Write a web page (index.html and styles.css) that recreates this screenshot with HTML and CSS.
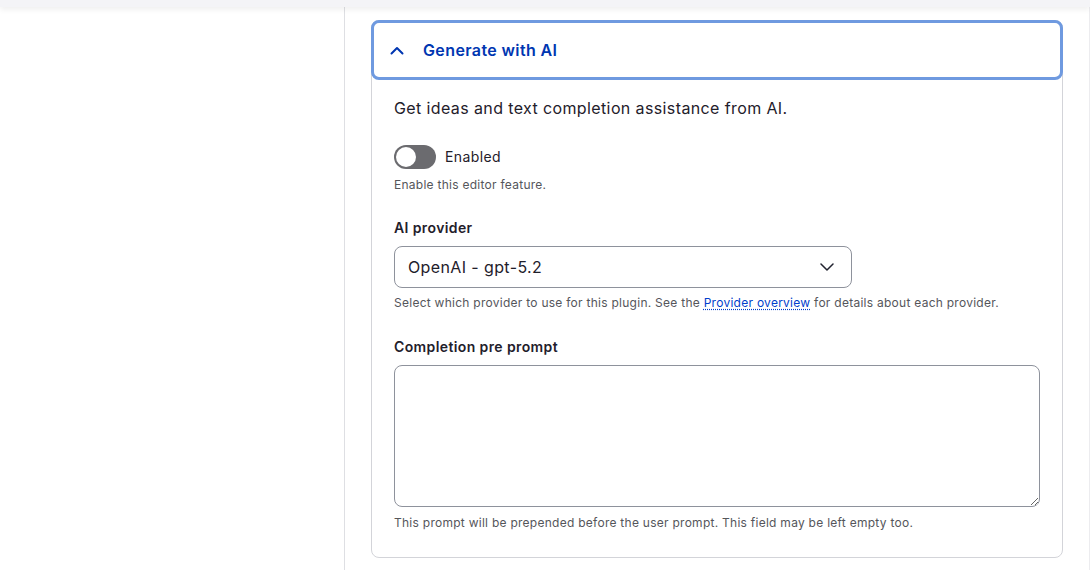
FILE: index.html
```html
<!DOCTYPE html>
<html lang="en">
<head>
    <meta charset="UTF-8">
    <meta name="viewport" content="width=device-width, initial-scale=1.0">
    <title>Generate with AI</title>
    <link rel="stylesheet" href="styles.css">
</head>
<body>

    <div class="topbar"></div>

    <div class="layout">
        <div class="sidebar"></div>

        <div class="main">
            <details class="card" open>
                <summary class="card-summary">
                    <svg class="chevron" width="14" height="9" viewBox="0 0 14 9">
                        <path d="M1.5 7.5 L7 2 L12.5 7.5" fill="none" stroke="#0036b1" stroke-width="2" stroke-linecap="round" stroke-linejoin="round"/>
                    </svg>
                    <span class="card-title">Generate with AI</span>
                </summary>

                <div class="card-body">
                    <p class="intro">Get ideas and text completion assistance from AI.</p>

                    <!-- Enabled toggle -->
                    <label class="toggle-row">
                        <span class="toggle"><span class="knob"></span></span>
                        <span class="toggle-label">Enabled</span>
                    </label>
                    <div class="description">Enable this editor feature.</div>

                    <!-- Provider -->
                    <div class="field">
                        <label class="field-label">AI provider</label>
                        <div class="select">
                            <span>OpenAI - gpt-5.2</span>
                            <svg width="14" height="8" viewBox="0 0 14 8">
                                <path d="M1 1 L7 7 L13 1" fill="none" stroke="#222330" stroke-width="1.5" stroke-linecap="round" stroke-linejoin="round"/>
                            </svg>
                        </div>
                        <div class="description">Select which provider to use for this plugin. See the <a href="#">Provider overview</a> for details about each provider.</div>
                    </div>

                    <!-- Pre prompt -->
                    <div class="field">
                        <label class="field-label">Completion pre prompt</label>
                        <textarea class="textarea"></textarea>
                        <div class="description">This prompt will be prepended before the user prompt. This field may be left empty too.</div>
                    </div>
                </div>
            </details>
        </div>
    </div>

</body>
</html>
```

FILE: styles.css
```css
body {
    font-family: Inter, "Noto Sans", sans-serif;
    letter-spacing: 0.024em;
    color: #1f202b;
    background-color: #fff;
    margin: 0;
    padding: 0;
}
.topbar {
    height: 7px;
    background-color: #f4f4f7;
    box-shadow: 0 2px 6px rgba(0, 0, 0, 0.08);
    position: relative;
}
.layout {
    display: flex;
    height: 563px;
}
.sidebar {
    width: 344px;
    border-right: 1px solid #dedfe3;
    flex-shrink: 0;
}
.main {
    flex: 1;
    padding: 13px 26px 0 26px;
    border-right: 1px solid #ececef;
}
.card {
    border: 1px solid #d3d4d9;
    border-radius: 8px;
    background-color: #fff;
}
.card-summary {
    list-style: none;
    display: flex;
    align-items: center;
    height: 54px;
    margin: -1px;
    padding-left: 16px;
    border: 3px solid #6f9ae0;
    border-radius: 8px;
    cursor: pointer;
}
.card-summary::-webkit-details-marker {
    display: none;
}
.chevron {
    margin-right: 19px;
}
.card-title {
    font-size: 16px;
    font-weight: 600;
    color: #0036b1;
}
.card-body {
    padding: 17px 22px 25px 22px;
}
.intro {
    margin: 0;
    font-size: 16px;
    line-height: 24px;
}
.toggle-row {
    display: flex;
    align-items: center;
    margin-top: 25px;
    gap: 9px;
}
.toggle {
    width: 42px;
    height: 24px;
    border-radius: 12px;
    background-color: #6b6b6f;
    position: relative;
}
.knob {
    position: absolute;
    left: 2px;
    top: 2px;
    width: 20px;
    height: 20px;
    border-radius: 50%;
    background-color: #fff;
}
.toggle-label {
    font-size: 14px;
    line-height: 20px;
}
.description {
    font-size: 12px;
    line-height: 18px;
    letter-spacing: 0.022em;
    color: #55565b;
    margin-top: 7px;
}
.description a {
    color: #003ecc;
    text-decoration: underline dotted;
    text-underline-offset: 2px;
}
.field {
    margin-top: 24px;
}
.field + .field {
    margin-top: 25px;
}
.field-label {
    display: block;
    font-size: 14px;
    line-height: 20px;
    font-weight: 600;
    margin-bottom: 8px;
}
.select {
    width: 458px;
    height: 42px;
    box-sizing: border-box;
    border: 1px solid #8e929c;
    border-radius: 8px;
    display: flex;
    align-items: center;
    justify-content: space-between;
    padding: 0 17px 0 13px;
    font-size: 16px;
}
.select + .description {
    margin-top: 6px;
}
.textarea {
    display: block;
    width: 100%;
    height: 142px;
    box-sizing: border-box;
    border: 1px solid #8e929c;
    border-radius: 8px;
    font-family: inherit;
    font-size: 16px;
    resize: vertical;
    margin: 0;
}
```
